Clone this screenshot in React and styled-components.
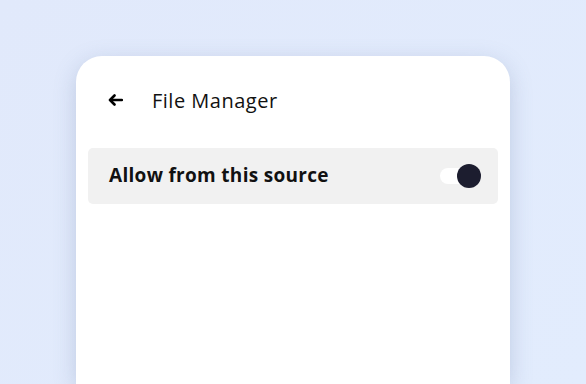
import React, { useState } from "react";
import styled, { createGlobalStyle } from "styled-components";

const Global = createGlobalStyle`
  html, body { margin: 0; padding: 0; }
  body {
    width: 586px; height: 384px; overflow: hidden;
    background: linear-gradient(135deg, #e1e9fb 0%, #e2ecfd 100%);
    font-family: "Open Sans", "Noto Sans", sans-serif;
  }
`;

const Stage = styled.div`
  padding: 56px 76px 0 76px;
  height: 384px;
  box-sizing: border-box;
`;

const Card = styled.div`
  width: 434px;
  height: 328px;
  background: #fff;
  border-radius: 26px 26px 0 0;
  box-shadow: 0 6px 22px rgba(110, 128, 170, 0.3);
  padding: 12px 12px 0 12px;
  box-sizing: border-box;
`;

const Header = styled.div`
  display: flex;
  align-items: center;
  height: 64px;
  padding-left: 20px;
  gap: 29px;
`;

const BackButton = styled.button`
  border: none; background: none; padding: 0; margin: 0;
  width: 15px; height: 12px;
  display: flex; align-items: center; justify-content: center;
  cursor: pointer;
`;

const Title = styled.h1`
  margin: 0;
  font-size: 20px;
  font-weight: 400;
  color: #111;
  letter-spacing: 0.5px;
`;

const Row = styled.div`
  margin-top: 16px;
  height: 56px;
  background: #f1f1f1;
  border-radius: 5px;
  display: flex;
  align-items: center;
  justify-content: space-between;
  padding: 0 28px 0 21px;
`;

const Label = styled.span`
  font-size: 19px;
  font-weight: 700;
  color: #111;
  letter-spacing: 0.3px;
  margin-top: -2px;
`;

const Track = styled.div`
  position: relative;
  width: 30px;
  height: 16px;
  border-radius: 8px;
  background: #ffffff;
  cursor: pointer;
`;

const Thumb = styled.div`
  position: absolute;
  top: -4px;
  left: ${(p) => (p.$on ? "17px" : "-4px")};
  width: 24px;
  height: 24px;
  border-radius: 50%;
  background: #1c1d2f;
`;

export default function App() {
  const [on, setOn] = useState(true);
  return (
    <>
      <Global />
      <Stage>
        <Card>
          <Header>
            <BackButton aria-label="Back">
              <svg width="15" height="12" viewBox="0 0 15 12">
                <path d="M14 6H3" stroke="#000" strokeWidth="2.4" strokeLinecap="round" />
                <path d="M6.5 1.5L2 6l4.5 4.5" stroke="#000" strokeWidth="2.6" fill="none" strokeLinecap="round" strokeLinejoin="round" />
              </svg>
            </BackButton>
            <Title>File Manager</Title>
          </Header>
          <Row>
            <Label>Allow from this source</Label>
            <Track onClick={() => setOn(!on)}>
              <Thumb $on={on} />
            </Track>
          </Row>
        </Card>
      </Stage>
    </>
  );
}
